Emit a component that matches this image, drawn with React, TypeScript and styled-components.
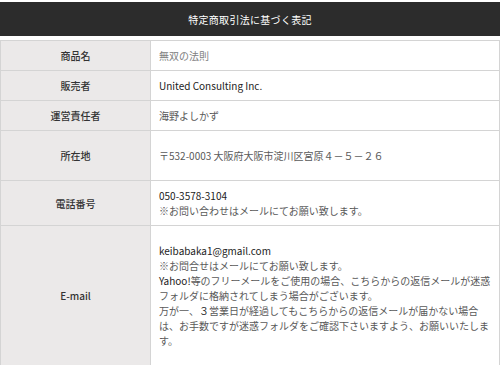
import React from 'react';
import styled, { createGlobalStyle } from 'styled-components';

const GlobalStyle = createGlobalStyle`
  html, body {
    margin: 0;
    padding: 0;
    background: #fff;
  }
  body {
    font-family: "Noto Sans CJK JP", "Noto Sans", sans-serif;
    font-size: 10px;
    color: #444;
  }
`;

const Page = styled.div`
  padding-top: 2px;
  width: 500px;
`;

const Heading = styled.h2`
  margin: 0 0 4px;
  height: 34px;
  background: #2c2c2c;
  color: #fff;
  font-size: 10px;
  font-weight: 400;
  display: flex;
  align-items: center;
  justify-content: center;
  letter-spacing: 0.3px;
`;

const Table = styled.table`
  width: 500px;
  border-collapse: collapse;
  table-layout: fixed;
  border: 1px solid #d4d4d4;
`;

const Label = styled.th`
  width: 149px;
  background: #ebe9e9;
  color: #333;
  font-weight: 500;
  font-size: 10px;
  text-align: center;
  vertical-align: middle;
  border: 1px solid #d4d4d4;
  padding: 0;
`;

const Value = styled.td<{ $tall?: boolean }>`
  padding: ${({ $tall }) => ($tall ? '17px 8px' : '7px 8px')};
  line-height: 15px;
  border: 1px solid #d4d4d4;
  vertical-align: middle;
  color: #595959;
`;

const Dark = styled.span`
  color: #222;
`;

const Faint = styled.span`
  color: #808080;
`;

const rows: { label: string; tall?: boolean; body: React.ReactNode }[] = [
  { label: '商品名', body: <Faint>無双の法則</Faint> },
  { label: '販売者', body: <Dark>United Consulting Inc.</Dark> },
  { label: '運営責任者', body: '海野よしかず' },
  { label: '所在地', tall: true, body: '〒532-0003 大阪府大阪市淀川区宮原４－５－２６' },
  {
    label: '電話番号',
    body: (
      <>
        <Dark>050-3578-3104</Dark>
        <br />
        ※お問い合わせはメールにてお願い致します。
      </>
    ),
  },
  {
    label: 'E-mail',
    tall: true,
    body: (
      <>
        <Dark>keibabaka1@gmail.com</Dark>
        <br />
        ※お問合せはメールにてお願い致します。
        <br />
        <Dark>Yahoo!</Dark>等のフリーメールをご使用の場合、こちらからの返信メールが迷惑フォルダに格納されてしまう場合がございます。
        <br />
        万が一、<Dark>３</Dark>営業日が経過してもこちらからの返信メールが届かない場合は、お手数ですが迷惑フォルダをご確認下さいますよう、お願いいたします。
      </>
    ),
  },
];

const App: React.FC = () => {
  return (
    <>
      <GlobalStyle />
      <Page>
        <Heading>特定商取引法に基づく表記</Heading>
        <Table>
          <tbody>
            {rows.map((row) => (
              <tr key={row.label}>
                <Label>{row.label}</Label>
                <Value $tall={row.tall}>{row.body}</Value>
              </tr>
            ))}
          </tbody>
        </Table>
      </Page>
    </>
  );
};

export default App;
